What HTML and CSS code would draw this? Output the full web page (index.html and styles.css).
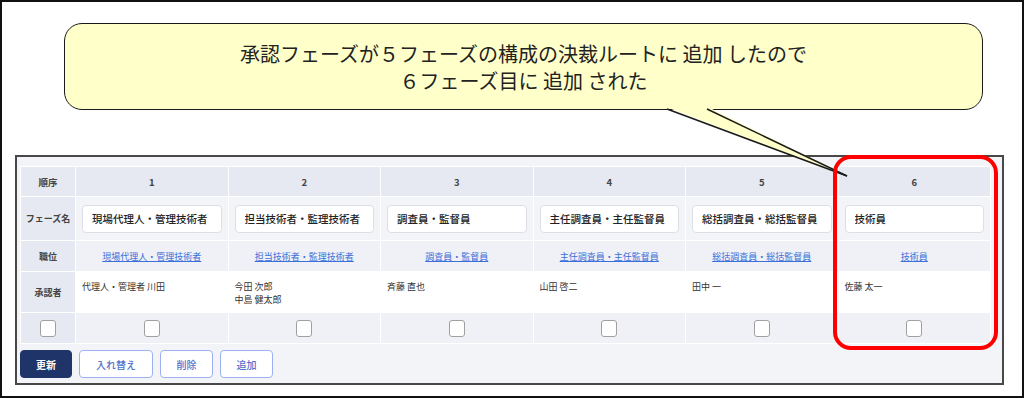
FILE: index.html
```html
<!DOCTYPE html>
<html lang="ja">
<head>
    <meta charset="UTF-8">
    <meta name="viewport" content="width=device-width, initial-scale=1.0">
    <title>決裁ルート - フェーズ追加</title>
    <link rel="stylesheet" href="styles.css">
</head>
<body>
    <div class="frame">
        <!-- Callout -->
        <div class="callout">
            <p>承認フェーズが５フェーズの構成の決裁ルートに 追加 したので</p>
            <p>６フェーズ目に 追加 された</p>
        </div>

        <!-- Route panel -->
        <div class="panel">
            <table class="route">
                <colgroup>
                    <col class="col-label">
                    <col><col><col><col><col><col>
                </colgroup>
                <tr class="row-order">
                    <th class="label">順序</th>
                    <th>1</th>
                    <th>2</th>
                    <th>3</th>
                    <th>4</th>
                    <th>5</th>
                    <th>6</th>
                </tr>
                <tr class="row-name">
                    <th class="label">フェーズ名</th>
                    <td><input type="text" class="phase-input" value="現場代理人・管理技術者" readonly></td>
                    <td><input type="text" class="phase-input" value="担当技術者・監理技術者" readonly></td>
                    <td><input type="text" class="phase-input" value="調査員・監督員" readonly></td>
                    <td><input type="text" class="phase-input" value="主任調査員・主任監督員" readonly></td>
                    <td><input type="text" class="phase-input" value="総括調査員・総括監督員" readonly></td>
                    <td><input type="text" class="phase-input" value="技術員" readonly></td>
                </tr>
                <tr class="row-post">
                    <th class="label">職位</th>
                    <td><a href="#">現場代理人・管理技術者</a></td>
                    <td><a href="#">担当技術者・監理技術者</a></td>
                    <td><a href="#">調査員・監督員</a></td>
                    <td><a href="#">主任調査員・主任監督員</a></td>
                    <td><a href="#">総括調査員・総括監督員</a></td>
                    <td><a href="#">技術員</a></td>
                </tr>
                <tr class="row-approver">
                    <th class="label">承認者</th>
                    <td>代理人・管理者 川田</td>
                    <td>今田 次郎<br>中島 健太郎</td>
                    <td>斉藤 直也</td>
                    <td>山田 啓二</td>
                    <td>田中 一</td>
                    <td>佐藤 太一</td>
                </tr>
                <tr class="row-check">
                    <th class="label"><input type="checkbox" class="check"></th>
                    <td><input type="checkbox" class="check"></td>
                    <td><input type="checkbox" class="check"></td>
                    <td><input type="checkbox" class="check"></td>
                    <td><input type="checkbox" class="check"></td>
                    <td><input type="checkbox" class="check"></td>
                    <td><input type="checkbox" class="check"></td>
                </tr>
            </table>

            <div class="actions">
                <button class="btn btn-primary">更新</button>
                <button class="btn btn-swap">入れ替え</button>
                <button class="btn">削除</button>
                <button class="btn">追加</button>
            </div>
        </div>

        <!-- Callout tail (drawn over the panel) -->
        <svg class="tail" width="1024" height="398" viewBox="0 0 1024 398">
            <polygon points="666,107 708,107 847,176" fill="#ffffc9"/>
            <line x1="667" y1="109" x2="847" y2="176" stroke="#1a1a1a" stroke-width="1.5"/>
            <line x1="707" y1="109" x2="847" y2="176" stroke="#1a1a1a" stroke-width="1.5"/>
        </svg>

        <!-- Highlight around the new phase -->
        <div class="highlight"></div>
    </div>
</body>
</html>
```

FILE: styles.css
```css
/* Page */
body {
    margin: 0;
    padding: 0;
    background-color: #FFFFFF;
    font-family: "Noto Sans CJK JP", "Noto Sans", sans-serif;
    color: #333333;
}
.frame {
    position: relative;
    width: 1024px;
    height: 398px;
    box-sizing: border-box;
    border: 2px solid #111111;
    padding-top: 21px;
}

/* Callout */
.callout {
    margin-left: 62px;
    width: 919px;
    height: 87px;
    box-sizing: border-box;
    border: 1.5px solid #1a1a1a;
    border-radius: 18px;
    background-color: #ffffc9; /* pale yellow */
    display: flex;
    flex-direction: column;
    justify-content: center;
    align-items: center;
    font-size: 20px;
    line-height: 27px;
    color: #222222;
}
.callout p {
    margin: 0;
}
.tail {
    position: absolute;
    top: -2px;
    left: -2px;
    pointer-events: none;
}
.highlight {
    position: absolute;
    left: 831px;
    top: 153px;
    width: 165px;
    height: 195px;
    box-sizing: border-box;
    border: 4px solid #ff0000;
    border-radius: 18px;
    pointer-events: none;
}

/* Panel */
.panel {
    margin-top: 45px;
    margin-left: 13px;
    width: 989px;
    height: 230px;
    box-sizing: border-box;
    border: 2px solid #484848;
    background-color: #f3f4f8;
    padding: 9px 0 0 3px;
}
.route {
    width: 971px;
    table-layout: fixed;
    border-collapse: collapse;
}
.col-label {
    width: 55px;
}
.route th,
.route td {
    border: 1px solid #FFFFFF;
    padding: 0;
    text-align: center;
    vertical-align: middle;
    font-size: 9px;
}
.route th {
    font-weight: bold;
    color: #444444;
    background-color: #e6e9f1;
}
.route th.label {
    background-color: #e6e9f1;
}
.row-order {
    height: 30px;
}
.row-order th {
    font-size: 9.5px;
}
.row-name {
    height: 44px;
}
.row-name td {
    background-color: #f3f4f8;
}
.row-post {
    height: 31px;
}
.row-post td {
    background-color: #eff1f6;
}
.row-post a {
    color: #3b6fd9;
    text-decoration: underline;
}
.row-approver {
    height: 41px;
}
.row-approver td {
    background-color: #FFFFFF;
    text-align: left;
    vertical-align: top;
    padding: 8px 6px 0;
    line-height: 13px;
    color: #333333;
}
.row-check {
    height: 31px;
}
.row-check td {
    background-color: #eff1f6;
}

.phase-input {
    display: block;
    width: calc(100% - 12px);
    height: 28px;
    margin: 0 auto;
    box-sizing: border-box;
    border: 1px solid #dcdfe6;
    border-radius: 4px;
    background-color: #FFFFFF;
    padding: 0 9px;
    font-family: "Noto Sans CJK JP", "Noto Sans", sans-serif;
    font-size: 10.5px;
    font-weight: 500;
    color: #222222;
    outline: none;
}
.check {
    -webkit-appearance: none;
    appearance: none;
    display: block;
    width: 16px;
    height: 17px;
    margin: 0 auto;
    border: 1px solid #a0a0a0;
    border-radius: 3px;
    background-color: #FFFFFF;
}

/* Buttons */
.actions {
    display: flex;
    gap: 7px;
    margin-top: 6px;
}
.btn {
    height: 28px;
    min-width: 53px;
    padding: 0 12px;
    box-sizing: border-box;
    border: 1px solid #9db1f0;
    border-radius: 4px;
    background-color: #FFFFFF;
    color: #4f70cc;
    font-family: "Noto Sans CJK JP", "Noto Sans", sans-serif;
    font-size: 10px;
    font-weight: 500;
    cursor: pointer;
}
.btn-swap {
    width: 74px;
}
.btn-primary {
    width: 52px;
    min-width: 52px;
    border-color: #1f3569;
    background-color: #1f3569; /* Navy */
    color: #FFFFFF;
    font-weight: bold;
}
```
